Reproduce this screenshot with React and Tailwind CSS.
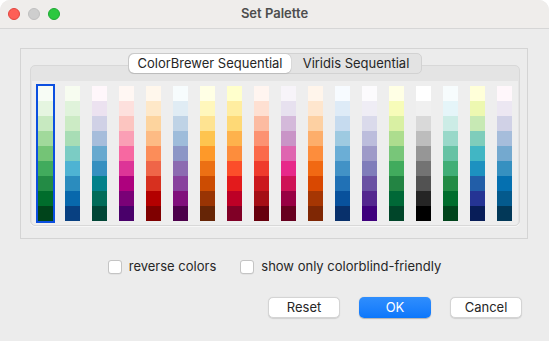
import React from 'react';

// ColorBrewer 9-class sequential schemes, in the order the dialog shows them
const palettes = [
  ['#f7fcf5', '#e5f5e0', '#c7e9c0', '#a1d99b', '#74c476', '#41ab5d', '#238b45', '#006d2c', '#00441b'],
  ['#f7fcf0', '#e0f3db', '#ccebc5', '#a8ddb5', '#7bccc4', '#4eb3d3', '#2b8cbe', '#0868ac', '#084081'],
  ['#fff7fb', '#ece2f0', '#d0d1e6', '#a6bddb', '#67a9cf', '#3690c0', '#02818a', '#016c59', '#014636'],
  ['#fff7f3', '#fde0dd', '#fcc5c0', '#fa9fb5', '#f768a1', '#dd3497', '#ae017e', '#7a0177', '#49006a'],
  ['#fff7ec', '#fee8c8', '#fdd49e', '#fdbb84', '#fc8d59', '#ef6548', '#d7301f', '#b30000', '#7f0000'],
  ['#f7fcfd', '#e0ecf4', '#bfd3e6', '#9ebcda', '#8c96c6', '#8c6bb1', '#88419d', '#810f7c', '#4d004b'],
  ['#ffffe5', '#fff7bc', '#fee391', '#fec44f', '#fe9929', '#ec7014', '#cc4c02', '#993404', '#662506'],
  ['#ffffcc', '#ffeda0', '#fed976', '#feb24c', '#fd8d3c', '#fc4e2a', '#e31a1c', '#bd0026', '#800026'],
  ['#fff5f0', '#fee0d2', '#fcbba1', '#fc9272', '#fb6a4a', '#ef3b2c', '#cb181d', '#a50f15', '#67000d'],
  ['#f7f4f9', '#e7e1ef', '#d4b9da', '#c994c7', '#df65b0', '#e7298a', '#ce1256', '#980043', '#67001f'],
  ['#fff5eb', '#fee6ce', '#fdd0a2', '#fdae6b', '#fd8d3c', '#f16913', '#d94801', '#a63603', '#7f2704'],
  ['#f7fbff', '#deebf7', '#c6dbef', '#9ecae1', '#6baed6', '#4292c6', '#2171b5', '#08519c', '#08306b'],
  ['#fcfbfd', '#efedf5', '#dadaeb', '#bcbddc', '#9e9ac8', '#807dba', '#6a51a3', '#54278f', '#3f007d'],
  ['#ffffe5', '#f7fcb9', '#d9f0a3', '#addd8e', '#78c679', '#41ab5d', '#238443', '#006837', '#004529'],
  ['#ffffff', '#f0f0f0', '#d9d9d9', '#bdbdbd', '#969696', '#737373', '#525252', '#252525', '#000000'],
  ['#f7fcfd', '#e5f5f9', '#ccece6', '#99d8c9', '#66c2a4', '#41ae76', '#238b45', '#006d2c', '#00441b'],
  ['#ffffd9', '#edf8b1', '#c7e9b4', '#7fcdbb', '#41b6c4', '#1d91c0', '#225ea8', '#253494', '#081d58'],
  ['#fff7fb', '#ece7f2', '#d0d1e6', '#a6bddb', '#74a9cf', '#3690c0', '#0570b0', '#045a8d', '#023858'],
];

function Checkbox({ label }) {
  return (
    <label className="flex items-center gap-[7px]">
      <span className="h-[14px] w-[14px] rounded-[3px] border border-[#c4c4c4] bg-white shadow-[0_0.5px_0.5px_rgba(0,0,0,0.08)]" />
      <span>{label}</span>
    </label>
  );
}

function Button({ children, primary }) {
  return (
    <button
      className={
        primary
          ? 'flex h-[21px] w-[72px] items-center justify-center rounded-[5px] bg-gradient-to-b from-[#2f8efd] to-[#0b77fb] text-white shadow-[0_0.5px_1px_rgba(0,0,0,0.25)]'
          : 'flex h-[21px] w-[72px] items-center justify-center rounded-[5px] border border-[#d4d4d4] bg-white text-[#262626] shadow-[0_0.5px_1px_rgba(0,0,0,0.12)]'
      }
    >
      {children}
    </button>
  );
}

export default function App() {
  return (
    <div
      className="h-[341px] w-[549px] overflow-hidden bg-white text-[13px] text-[#262626]"
      style={{ fontFamily: 'Inter, "Noto Sans", sans-serif' }}
    >
      <div className="flex h-full flex-col rounded-t-[10px] bg-[#ececec]">
        {/* title bar */}
        <div className="relative flex h-[29px] shrink-0 items-center rounded-t-[10px] border-b border-[#d6d6d6] bg-[#efedeb]">
          <div className="ml-[8px] flex gap-[8px]">
            <span className="h-[12px] w-[12px] rounded-full border border-[#e2463f] bg-[#fe5f57]" />
            <span className="h-[12px] w-[12px] rounded-full border border-[#c0c0c0] bg-[#cecece]" />
            <span className="h-[12px] w-[12px] rounded-full border border-[#1eaa33] bg-[#2bc840]" />
          </div>
          <span className="absolute inset-x-0 text-center font-semibold text-[#4d4d4d]">Set Palette</span>
        </div>

        {/* group box */}
        <div className="ml-[20px] mt-[19px] h-[191px] w-[508px] border border-[#d4d4d4] pl-[9px] pt-[4px]">
          <div className="flex w-[490px] flex-col">
            <div className="relative z-10 mx-auto flex h-[21px] w-[294px] rounded-[5px] border border-[#d2d2d2] bg-[#e3e3e3]">
              <div className="flex w-[162px] items-center justify-center rounded-[5px] bg-white shadow-[0_0_1px_rgba(0,0,0,0.35),0_1px_1px_rgba(0,0,0,0.08)]">
                ColorBrewer Sequential
              </div>
              <div className="flex flex-1 items-center justify-center">Viridis Sequential</div>
            </div>
            <div className="-mt-[9px] h-[161px] rounded-[5px] border border-[#d8d8d8] bg-[#e4e4e4] px-[1px] pt-[15px] shadow-[0_1px_0_rgba(255,255,255,0.6)]">
              <div className="flex h-[144px] gap-[8px] rounded-b-[4px] bg-[#eeeeee] pl-[4px] pt-[3px]">
                {palettes.map((p, i) => (
                  <div
                    key={i}
                    className={
                      i === 0
                        ? 'flex h-[139px] w-[19px] flex-col border-2 border-[#0c4fe0]'
                        : 'flex h-[139px] w-[19px] flex-col border-2 border-transparent'
                    }
                  >
                    {p.map((c) => (
                      <div key={c} className="h-[15px] w-[15px]" style={{ background: c }} />
                    ))}
                  </div>
                ))}
              </div>
            </div>
          </div>
        </div>

        {/* options */}
        <div className="mt-[20px] flex h-[16px] items-center justify-center gap-[24px]">
          <Checkbox label="reverse colors" />
          <Checkbox label="show only colorblind-friendly" />
        </div>

        {/* buttons */}
        <div className="mr-[27px] mt-[22px] flex justify-end gap-[19px]">
          <Button>Reset</Button>
          <Button primary>OK</Button>
          <Button>Cancel</Button>
        </div>
      </div>
    </div>
  );
}
